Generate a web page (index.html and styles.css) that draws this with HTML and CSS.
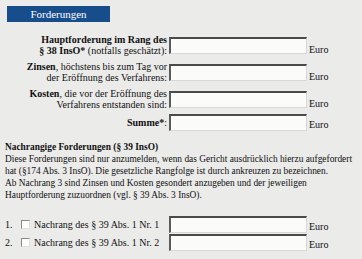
FILE: index.html
```html
<!DOCTYPE html>
<html lang="de">
<head>
<meta charset="utf-8">
<title>Forderungen</title>
<link rel="stylesheet" href="styles.css">
</head>
<body>
<div class="page">
  <div class="tab">Forderungen</div>

  <div class="form">
    <div class="row r1">
      <div class="label"><b>Hauptforderung im Rang des</b><br><b>§ 38 InsO*</b> (notfalls geschätzt):</div>
      <div class="field"></div>
      <div class="unit">Euro</div>
    </div>
    <div class="row r2">
      <div class="label"><b>Zinsen</b>, höchstens bis zum Tag vor<br>der Eröffnung des Verfahrens:</div>
      <div class="field"></div>
      <div class="unit">Euro</div>
    </div>
    <div class="row r3">
      <div class="label"><b>Kosten</b>, die vor der Eröffnung des<br>Verfahrens entstanden sind:</div>
      <div class="field"></div>
      <div class="unit">Euro</div>
    </div>
    <div class="row r4">
      <div class="label"><b>Summe*</b>:</div>
      <div class="field"></div>
      <div class="unit">Euro</div>
    </div>
  </div>

  <div class="section">
    <div class="heading">Nachrangige Forderungen (§ 39 InsO)</div>
    <p class="text">Diese Forderungen sind nur anzumelden, wenn das Gericht ausdrücklich hierzu aufgefordert<br>hat (§174 Abs. 3 InsO). Die gesetzliche Rangfolge ist durch ankreuzen zu bezeichnen.<br>Ab Nachrang 3 sind Zinsen und Kosten gesondert anzugeben und der jeweiligen<br>Hauptforderung zuzuordnen (vgl. § 39 Abs. 3 InsO).</p>
  </div>

  <div class="ranks">
    <div class="row rank">
      <div class="rlabel"><span class="num">1.</span><span class="check"></span><span>Nachrang des § 39 Abs. 1 Nr. 1</span></div>
      <div class="field"></div>
      <div class="unit">Euro</div>
    </div>
    <div class="row rank">
      <div class="rlabel"><span class="num">2.</span><span class="check"></span><span>Nachrang des § 39 Abs. 1 Nr. 2</span></div>
      <div class="field"></div>
      <div class="unit">Euro</div>
    </div>
  </div>
</div>
</body>
</html>
```
FILE: styles.css
```css
html, body {
  margin: 0;
  padding: 0;
  background: #ebebea;
}
body {
  font-family: "Liberation Serif", "Times New Roman", serif;
  font-size: 10px;
  line-height: 11px;
  color: #111;
}
.page {
  padding: 6px 5px 0 5px;
}
.tab {
  margin-left: 2px;
  width: 103px;
  height: 16px;
  background: #174d8a;
  color: #fff;
  font-size: 11px;
  line-height: 16px;
  text-align: center;
}
.form {
  margin-top: 12px;
  display: flex;
  flex-direction: column;
}
.row {
  display: grid;
  grid-template-columns: 162px 138px auto;
  column-gap: 2px;
  align-items: center;
}
.r1 { height: 22px; }
.r2 { height: 22px; margin-top: 5px; }
.r3 { height: 22px; margin-top: 5px; }
.r4 { height: 17px; margin-top: 4px; }
.label {
  text-align: right;
}
.field {
  box-sizing: border-box;
  height: 17px;
  background: #fbfbf9;
  border-top: 2px solid #4a4a4a;
  border-left: 2px solid #5a5a5a;
  border-right: 1px solid #d8d8d6;
  border-bottom: 1px solid #d8d8d6;
}
.unit {
  align-self: end;
  line-height: 13px;
}
.section {
  margin-top: 10px;
  font-size: 9.4px;
}
.heading {
  font-weight: bold;
  line-height: 12px;
}
.text {
  margin: 0;
  line-height: 12px;
  white-space: nowrap;
}
.ranks {
  margin-top: 15px;
  display: flex;
  flex-direction: column;
  row-gap: 1px;
}
.rlabel {
  display: flex;
  align-items: center;
}
.num {
  width: 16px;
}
.check {
  box-sizing: border-box;
  width: 9px;
  height: 9px;
  margin-right: 4px;
  background: #fff;
  border-top: 1px solid #8a8a8a;
  border-left: 1px solid #8a8a8a;
  border-right: 1px solid #e0e0e0;
  border-bottom: 1px solid #e0e0e0;
}
```
